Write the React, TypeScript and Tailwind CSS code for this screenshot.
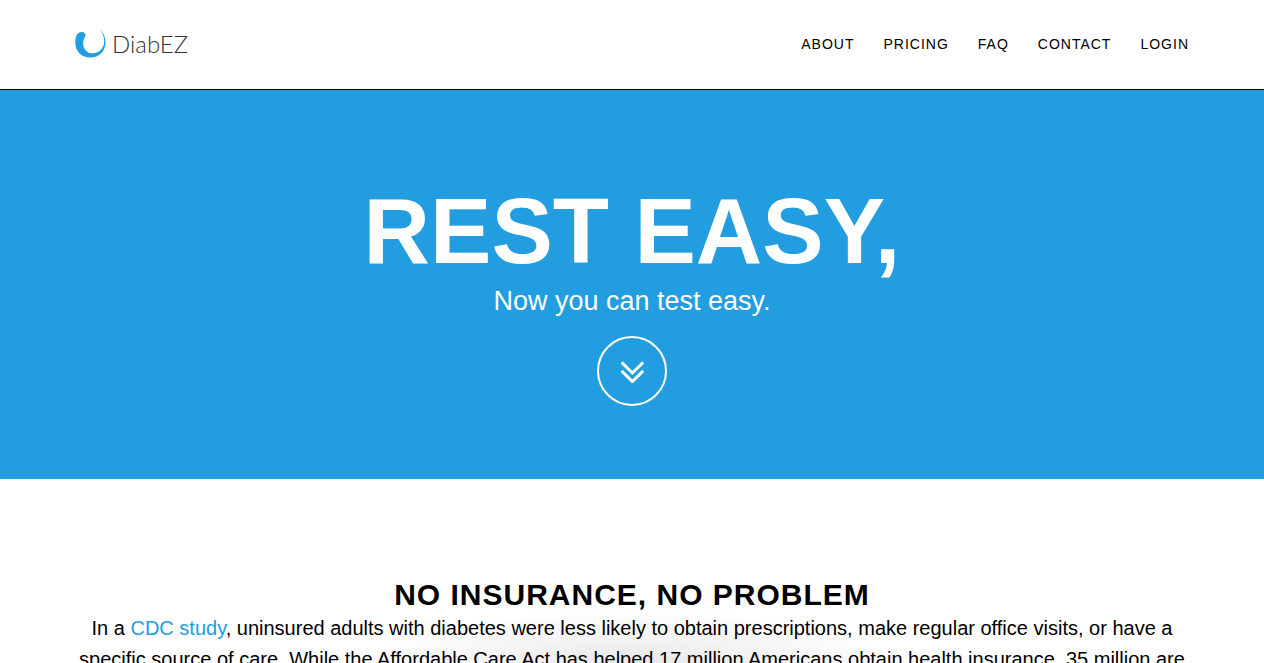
const links = ["About", "Pricing", "FAQ", "Contact", "Login"];

function Logo() {
  return (
    <a href="#home" aria-label="DiabEZ home" className="flex items-center gap-1.5">
      <svg viewBox="0 0 31 29" className="h-[29px] w-[31px]" aria-hidden="true">
        <path
          d="M4.2 3.6C7.2 2 10.8 3.2 10.4 6.4C10 8.6 8.2 10 8.2 14.2C8.2 20.3 12.3 24.3 17.5 24.3C24 24.3 28.9 19.5 29.2 12.8C29.3 8 27.7 4.3 25.2.6C28.6 4 30.6 8.5 30.5 13.6C30.3 22.5 24.2 28.6 15.6 28.6C6.6 28.6.3 22.5.3 13.8C.3 9.3 1.2 5.4 4.2 3.6Z"
          fill="#229de0"
        />
      </svg>
      <span className="font-['Lato'] text-2xl leading-7 font-light text-[#333]">DiabEZ</span>
    </a>
  );
}

export default function App() {
  return (
    <div className="h-screen overflow-hidden bg-white font-['Liberation_Sans',Arial,sans-serif] text-black">
      <header className="border-b border-black">
        <div className="mx-auto flex h-[89px] max-w-[1170px] items-center justify-between px-7 pb-0.5">
          <Logo />
          <nav aria-label="Main">
            <ul className="flex gap-[29px]">
              {links.map((label) => (
                <li key={label}>
                  <a href={"#" + label.toLowerCase()} className="text-sm tracking-[1px] uppercase">
                    {label}
                  </a>
                </li>
              ))}
            </ul>
          </nav>
        </div>
      </header>

      <section id="home" className="flex flex-col items-center bg-[#229de0] px-4 pt-[91px] pb-[73px] text-center text-white">
        <h1 className="text-[92px] leading-[100px] font-bold">REST EASY,</h1>
        <p className="text-[27px] leading-10">Now you can test easy.</p>
        <a
          href="#about"
          aria-label="Scroll to about"
          className="mt-[15px] flex size-[70px] items-center justify-center rounded-full border-2 border-white"
        >
          <svg viewBox="0 0 24 24" className="size-6" fill="none" stroke="currentColor" strokeWidth="3" aria-hidden="true">
            <path d="M1.6 3.4L12.4 14L23.2 3.4M1.6 11.9L12.4 22.5L23.2 11.9" />
          </svg>
        </a>
      </section>

      <section id="about" className="bg-[radial-gradient(270px_60px_at_50%_190px,#e6e6e6,#ffffff)] pt-[98px]">
        <div className="mx-auto max-w-[1170px] px-4 text-center">
          <h2 className="text-3xl leading-9 font-bold tracking-[1px]">NO INSURANCE, NO PROBLEM</h2>
          <p className="text-xl leading-[31px]">
            In a{" "}
            <a href="#study" className="text-[#229de0]">
              CDC study
            </a>
            , uninsured adults with diabetes were less likely to obtain prescriptions, make regular office visits, or have a
            specific source of care. While the Affordable Care Act has helped 17 million Americans obtain health insurance, 35
            million are
          </p>
        </div>
      </section>
    </div>
  );
}
